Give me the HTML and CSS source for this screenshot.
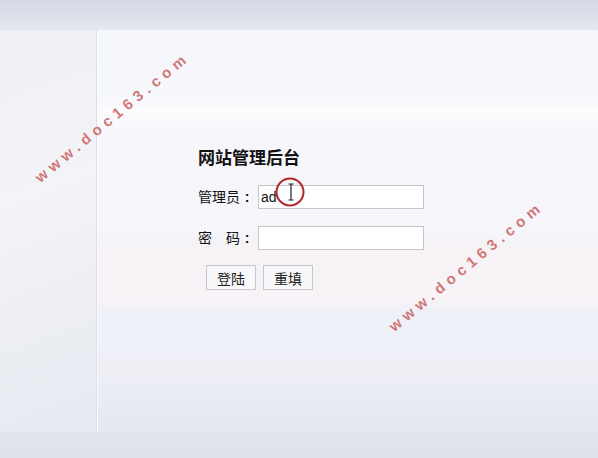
FILE: index.html
```html
<!DOCTYPE html>
<html lang="zh-CN">
<head>
    <meta charset="UTF-8">
    <title>网站管理后台</title>
    <link rel="stylesheet" href="styles.css">
</head>
<body>

    <div class="page">
        <div class="top-band"></div>

        <div class="main">
            <div class="sidebar"></div>

            <div class="content">
                <h1 class="title">网站管理后台</h1>

                <form class="login-form">
                    <div class="row">
                        <label for="user">管理员<span class="colon">:</span></label>
                        <input type="text" id="user" value="ad">
                    </div>
                    <div class="row">
                        <label for="pwd">密　码<span class="colon">:</span></label>
                        <input type="password" id="pwd">
                    </div>
                    <div class="buttons">
                        <button type="button">登陆</button>
                        <button type="reset">重填</button>
                    </div>
                </form>
            </div>
        </div>

        <div class="bottom-band"></div>

        <!-- mouse pointer highlight from the screen recording -->
        <svg class="pointer" width="32" height="32" viewBox="0 0 32 32">
            <circle cx="16" cy="16" r="13.5" fill="none" stroke="#b3272b" stroke-width="2"/>
            <path d="M14.5 8h2.5M19.5 8h-2.5M17 8v16M14.5 24h2.5M19.5 24h-2.5" stroke="#222" stroke-width="1.2" fill="none"/>
        </svg>

        <span class="watermark wm-1">www.doc163.com</span>
        <span class="watermark wm-2">www.doc163.com</span>
    </div>

</body>
</html>
```

FILE: styles.css
```css
body {
    margin: 0;
    font-family: "Noto Sans CJK SC", "Liberation Sans", sans-serif;
    color: #111;
}

.page {
    position: relative;
    width: 598px;
    height: 458px;
    overflow: hidden;
    display: flex;
    flex-direction: column;
    background: linear-gradient(to bottom,
        #f3f5fa 0px, #f6f8fc 100px, #fdfbfd 110px, #f6f6fb 140px,
        #f5f5fa 230px, #f6f2f5 250px, #f7f3f6 300px, #eff1f8 310px,
        #eef1f9 345px, #efeef5 360px, #edeef5 380px, #e7e9f0 420px);
}

.top-band {
    height: 30px;
    background: linear-gradient(to bottom, #d6d9e5 0px, #dadde8 12px, #e1e3ec 22px, #e5e7ee 30px);
}

.main {
    flex: 1;
    display: flex;
}

.sidebar {
    width: 96px;
    border-right: 1px solid #dde0e8;
    box-shadow: 1px 0 0 #fafbfd;
    background: linear-gradient(160deg, #eef0f5 0%, #f3f4f8 40%, #eceef4 70%, #e8eaf1 100%);
}

.content {
    padding: 117px 0 0 101px;
}

.title {
    margin: 0 0 17px;
    font-size: 17px;
    line-height: 20px;
    font-weight: bold;
    color: #111;
}

.row {
    display: flex;
    align-items: center;
    margin-bottom: 16px;
}

.row label {
    width: 60px;
    font-size: 14px;
    line-height: 24px;
}

.colon {
    display: inline-block;
    width: 14px;
    text-align: center;
    font-family: "Liberation Sans", sans-serif;
    font-weight: bold;
}

.row input {
    box-sizing: border-box;
    width: 166px;
    height: 24px;
    margin: 0;
    padding: 0 2px;
    border: 1px solid #c6c6c9;
    background: #fff;
    font-family: "Liberation Sans", sans-serif;
    font-size: 14px;
    color: #111;
    outline: none;
}

.buttons {
    display: flex;
    gap: 7px;
    padding-left: 8px;
    margin-top: -1px;
}

.buttons button {
    box-sizing: border-box;
    width: 50px;
    height: 25px;
    padding: 0;
    border: 1px solid #c8c8cc;
    background: #f8f7f9;
    font-family: "Noto Sans CJK SC", sans-serif;
    font-size: 14px;
    color: #222;
}

.bottom-band {
    height: 26px;
    background: linear-gradient(to bottom, #e3e5ed 0px, #dfe1ea 100%);
}

.pointer {
    position: absolute;
    left: 274px;
    top: 176px;
}

.watermark {
    position: absolute;
    font-family: "Liberation Sans", sans-serif;
    font-size: 15px;
    font-weight: bold;
    letter-spacing: 5px;
    color: #d07878;
    white-space: nowrap;
    transform: translate(-50%, -50%) rotate(-39.5deg);
}

.wm-1 {
    left: 112px;
    top: 117px;
}

.wm-2 {
    left: 466px;
    top: 266px;
}
```
